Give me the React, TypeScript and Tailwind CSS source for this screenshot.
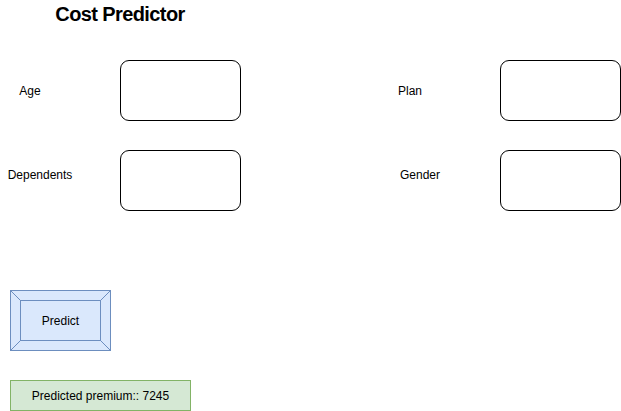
const fieldBox = "w-[121px] h-[61px] shrink-0 border border-black rounded-[9px] bg-white";

function PredictButton() {
  return (
    <button type="button" className="relative ml-[10px] w-[101px] h-[61px] shrink-0 flex items-center justify-center">
      <svg className="absolute inset-0" width="101" height="61" viewBox="0 0 101 61">
        <rect x="0.5" y="0.5" width="100" height="60" fill="#dae8fc" stroke="#6c8ebf" />
        <rect x="10.5" y="10.5" width="80" height="40" fill="#dae8fc" stroke="#6c8ebf" />
        <line x1="0.5" y1="0.5" x2="10.5" y2="10.5" stroke="#6c8ebf" />
        <line x1="100.5" y1="0.5" x2="90.5" y2="10.5" stroke="#6c8ebf" />
        <line x1="0.5" y1="60.5" x2="10.5" y2="50.5" stroke="#6c8ebf" />
        <line x1="100.5" y1="60.5" x2="90.5" y2="50.5" stroke="#6c8ebf" />
      </svg>
      <span className="relative text-[12px] leading-[14px] text-black">Predict</span>
    </button>
  );
}

export default function App() {
  return (
    <div className="w-[621px] h-[411px] overflow-hidden bg-white text-black font-['Liberation_Sans',Arial,sans-serif] flex flex-col">
      <div className="h-[60px] w-[240px] pt-[2px] text-center">
        <h1 className="text-[20px] leading-[24px] font-bold tracking-[-0.6px]">Cost Predictor</h1>
      </div>

      <div className="flex items-center h-[61px]">
        <label className="w-[60px] text-center text-[12px] leading-[14px]">Age</label>
        <div className={"ml-[60px] " + fieldBox} />
        <label className="ml-[139px] w-[60px] text-center text-[12px] leading-[14px]">Plan</label>
        <div className={"ml-[60px] " + fieldBox} />
      </div>

      <div className="flex items-start h-[61px] mt-[29px]">
        <label className="w-[80px] text-center text-[12px] leading-[50px] whitespace-nowrap">Dependents</label>
        <div className={"ml-[40px] " + fieldBox} />
        <label className="ml-[139px] w-[80px] text-center text-[12px] leading-[50px]">Gender</label>
        <div className={"ml-[40px] " + fieldBox} />
      </div>

      <div className="mt-[79px] flex">
        <PredictButton />
      </div>

      <div className="mt-[29px] ml-[10px] w-[181px] h-[31px] border border-[#82b366] bg-[#d5e8d4] flex items-center justify-center text-[12px] leading-[14px]">
        Predicted premium:: 7245
      </div>
    </div>
  );
}
